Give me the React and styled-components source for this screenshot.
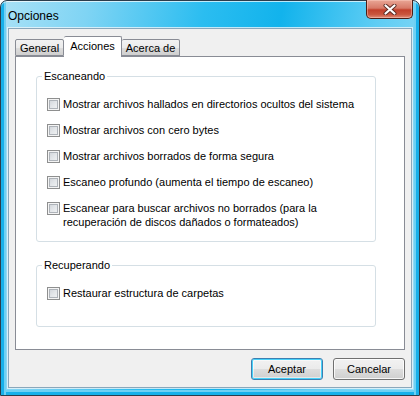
import React from 'react';
import styled, {createGlobalStyle} from 'styled-components';

const GlobalStyle = createGlobalStyle`
  html, body {
    margin: 0;
    padding: 0;
    background: #ffffff;
  }
  body {
    font-family: "Liberation Sans", Arial, sans-serif;
    font-size: 11px;
    color: #000;
  }
`;

const Window = styled.div`
  box-sizing: border-box;
  display: flex;
  flex-direction: column;
  width: 420px;
  height: 396px;
  padding: 0 7px 7px 7px;
  border: 1px solid #2b3d4c;
  border-radius: 7px 7px 0 0;
  background:
    linear-gradient(to right, #17b0ea 0px, #17b0ea 3px, #6fd0f3 3px, #6fd0f3 5px, transparent 5px),
    linear-gradient(to left, #17b0ea 0px, #17b0ea 3px, #6fd0f3 3px, #6fd0f3 5px, transparent 5px),
    linear-gradient(to top, #17b0ea 0px, #17b0ea 3px, #6fd0f3 3px, #6fd0f3 5px, transparent 5px),
    linear-gradient(100deg, #a9e1f6 0%, #7fd4f4 18%, #2bbdf0 42%, #12b3ec 58%, #5fcdf4 78%, #9fdff7 100%);
  box-shadow: inset 0 1px 0 rgba(255, 255, 255, 0.7);
`;

const TitleBar = styled.div`
  display: flex;
  align-items: flex-start;
  height: 28px;
`;

const Title = styled.span`
  margin-top: 8px;
  font-family: "Liberation Sans", Arial, sans-serif;
  font-size: 12px;
  color: #000;
`;

const CloseButton = styled.button`
  display: flex;
  align-items: center;
  justify-content: center;
  width: 47px;
  height: 19px;
  margin: -1px -1px 0 auto;
  padding: 0;
  border: 1px solid #4a1e16;
  border-top: 0;
  border-radius: 0 0 5px 5px;
  background: linear-gradient(to bottom, #e9a696 0%, #d77a68 45%, #c2402b 55%, #c9553d 80%, #e08d78 100%);
  box-shadow: inset 0 0 0 1px rgba(255, 210, 200, 0.45);
`;

const Client = styled.div`
  box-sizing: border-box;
  flex: 1;
  display: flex;
  flex-direction: column;
  padding: 7px 6px 7px 6px;
  background: #f0f0f0;
  border: 1px solid #8aa7bb;
  box-shadow: 0 0 0 1px rgba(235, 245, 250, 0.8);
`;

const TabStrip = styled.div`
  display: flex;
  align-items: flex-end;
  height: 20px;
  position: relative;
  z-index: 1;
`;

const Tab = styled.div`
  box-sizing: border-box;
  display: flex;
  justify-content: center;
  height: ${p => (p.$active ? '21px' : '17px')};
  margin-bottom: ${p => (p.$active ? '-1px' : '0')};
  padding: ${p => (p.$active ? '3px 6px 0' : '2px 4px 0')};
  border: 1px solid #898c95;
  border-bottom: ${p => (p.$active ? '0' : '1px solid #898c95')};
  border-left-width: ${p => (p.$first ? '1px' : '0')};
  border-radius: 2px 2px 0 0;
  background: ${p =>
    p.$active
      ? '#ffffff'
      : 'linear-gradient(to bottom, #f2f2f2 0%, #ebebeb 50%, #dddddd 51%, #cfcfcf 100%)'};
  line-height: 13px;
  white-space: nowrap;
`;

const Panel = styled.div`
  box-sizing: border-box;
  height: 294px;
  padding: 19px 28px 0 20px;
  background: #ffffff;
  border: 1px solid #898c95;
`;

const GroupBox = styled.div`
  position: relative;
  padding: 21px 10px ${p => p.$pb}px 10px;
  margin-bottom: 23px;
  border: 1px solid #d5dfe5;
  border-radius: 3px;
  box-shadow: inset 1px 1px 0 #ffffff;
`;

const Legend = styled.span`
  position: absolute;
  left: 5px;
  top: -8px;
  padding: 0 2px;
  background: #ffffff;
  line-height: 14px;
`;

const Rows = styled.div`
  display: flex;
  flex-direction: column;
  gap: 13px;
`;

const Row = styled.label`
  display: flex;
  align-items: flex-start;
  gap: 3px;
`;

const CheckBox = styled.span`
  box-sizing: border-box;
  flex: none;
  width: 13px;
  height: 13px;
  border: 1px solid #8e8f8f;
  background: linear-gradient(135deg, #cbcfd5 0%, #e3e6e9 50%, #f4f5f6 100%);
  box-shadow: inset 0 0 0 1px #f4f4f4, inset 0 0 0 2px #aeb3b9;
`;

const RowText = styled.span`
  margin-top: -1px;
  line-height: 14px;
  white-space: nowrap;
`;

const Footer = styled.div`
  display: flex;
  justify-content: flex-end;
  gap: 10px;
  margin-top: 8px;
`;

const Button = styled.button`
  box-sizing: border-box;
  width: 72px;
  height: 22px;
  padding: 0;
  border: 1px solid ${p => (p.$default ? '#3c7fb1' : '#707070')};
  border-radius: 3px;
  background: linear-gradient(to bottom, #f2f2f2 0%, #ebebeb 50%, #dddddd 51%, #cfcfcf 100%);
  box-shadow: ${p =>
    p.$default
      ? 'inset 0 0 0 1px #48d1f9, inset 0 0 0 2px rgba(255,255,255,0.5)'
      : 'inset 0 0 0 1px rgba(255,255,255,0.8)'};
  font-family: "Liberation Sans", Arial, sans-serif;
  font-size: 11px;
  color: #000;
`;

function CloseGlyph() {
  return (
    <svg width="14" height="11" viewBox="0 0 14 11">
      <path d="M2.5 1.5 L11.5 9.5 M11.5 1.5 L2.5 9.5" stroke="#5a2a22" strokeWidth="4" strokeLinecap="round" />
      <path d="M2.5 1.5 L11.5 9.5 M11.5 1.5 L2.5 9.5" stroke="#ffffff" strokeWidth="2.2" strokeLinecap="round" />
    </svg>
  );
}

const scanOptions = [
  'Mostrar archivos hallados en directorios ocultos del sistema',
  'Mostrar archivos con cero bytes',
  'Mostrar archivos borrados de forma segura',
  'Escaneo profundo (aumenta el tiempo de escaneo)',
  ['Escanear para buscar archivos no borrados (para la', 'recuperación de discos dañados o formateados)'],
];

function Option({text}) {
  return (
    <Row>
      <CheckBox />
      <RowText>
        {Array.isArray(text) ? (
          <>
            {text[0]}
            <br />
            {text[1]}
          </>
        ) : (
          text
        )}
      </RowText>
    </Row>
  );
}

export default function App() {
  return (
    <>
      <GlobalStyle />
      <Window>
        <TitleBar>
          <Title>Opciones</Title>
          <CloseButton>
            <CloseGlyph />
          </CloseButton>
        </TitleBar>
        <Client>
          <TabStrip>
            <Tab $first>General</Tab>
            <Tab $active>Acciones</Tab>
            <Tab>Acerca de</Tab>
          </TabStrip>
          <Panel>
            <GroupBox $pb={12}>
              <Legend>Escaneando</Legend>
              <Rows>
                {scanOptions.map((t, i) => (
                  <Option key={i} text={t} />
                ))}
              </Rows>
            </GroupBox>
            <GroupBox $pb={26}>
              <Legend>Recuperando</Legend>
              <Rows>
                <Option text="Restaurar estructura de carpetas" />
              </Rows>
            </GroupBox>
          </Panel>
          <Footer>
            <Button $default>Aceptar</Button>
            <Button>Cancelar</Button>
          </Footer>
        </Client>
      </Window>
    </>
  );
}
